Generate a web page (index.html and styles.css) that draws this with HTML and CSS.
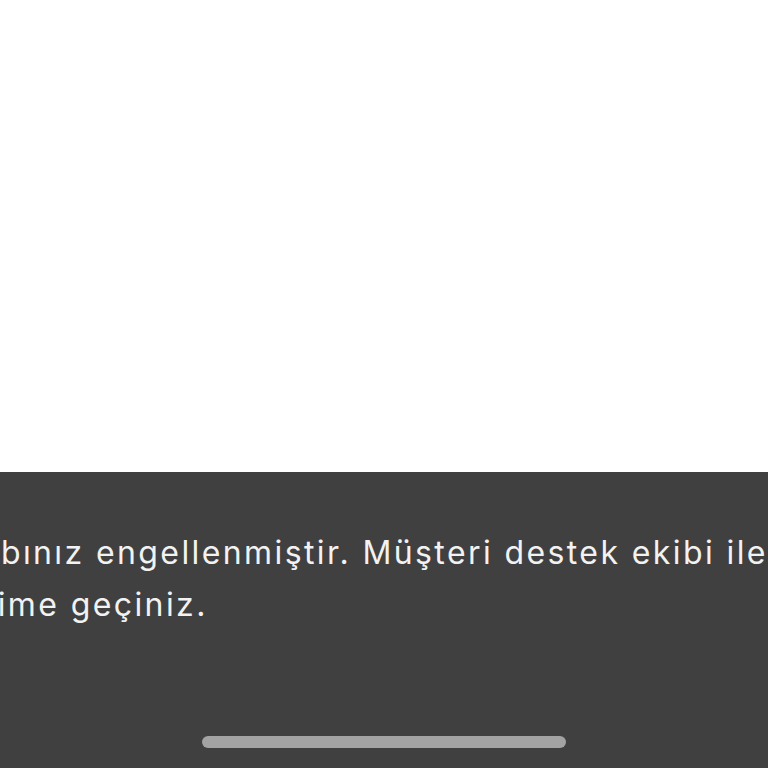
FILE: index.html
```html
<!DOCTYPE html>
<html lang="tr">
<head>
<meta charset="utf-8">
<link rel="stylesheet" href="styles.css">
</head>
<body>
<div class="screen">
  <div class="top"></div>
  <div class="sheet">
    <p class="msg">Hesabınız engellenmiştir. Müşteri destek ekibi ile<br>iletişime geçiniz.</p>
    <div class="home"></div>
  </div>
</div>
</body>
</html>
```
FILE: styles.css
```css
html, body {
  margin: 0;
  padding: 0;
  background: #ffffff;
}
.screen {
  width: 768px;
  height: 768px;
  display: flex;
  flex-direction: column;
  overflow: hidden;
}
.top {
  height: 472px;
  background: #ffffff;
  flex: none;
}
.sheet {
  flex: 1;
  background: #404040;
  display: flex;
  flex-direction: column;
  align-items: center;
  overflow: hidden;
}
.msg {
  align-self: flex-start;
  margin: 55px 0 0 -86px;
  white-space: nowrap;
  font-family: Inter, "Noto Sans", sans-serif;
  font-size: 32px;
  line-height: 52px;
  letter-spacing: 2.4px;
  color: #f2f2f2;
}
.home {
  margin-top: auto;
  margin-bottom: 20px;
  width: 364px;
  height: 12px;
  border-radius: 6px;
  background: #a3a3a3;
}
```
